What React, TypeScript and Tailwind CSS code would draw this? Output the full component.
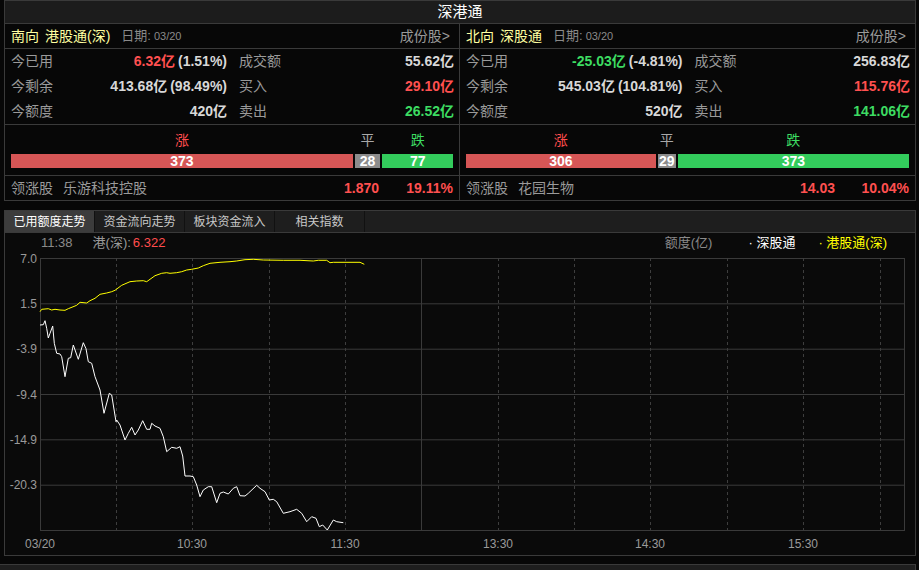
import React from 'react';

type Side = {
  dir: string;
  name: string;
  used: string;
  usedPct: string;
  usedColor: string;
  left: string;
  leftPct: string;
  quota: string;
  turnover: string;
  buy: string;
  sell: string;
  up: number;
  flat: number;
  down: number;
  leader: string;
  leaderPrice: string;
  leaderPct: string;
};

const sides: Side[] = [
  {
    dir: '南向',
    name: '港股通(深)',
    used: '6.32亿',
    usedPct: '(1.51%)',
    usedColor: 'text-[#ff5050]',
    left: '413.68亿',
    leftPct: '(98.49%)',
    quota: '420亿',
    turnover: '55.62亿',
    buy: '29.10亿',
    sell: '26.52亿',
    up: 373,
    flat: 28,
    down: 77,
    leader: '乐游科技控股',
    leaderPrice: '1.870',
    leaderPct: '19.11%',
  },
  {
    dir: '北向',
    name: '深股通',
    used: '-25.03亿',
    usedPct: '(-4.81%)',
    usedColor: 'text-[#3ddc62]',
    left: '545.03亿',
    leftPct: '(104.81%)',
    quota: '520亿',
    turnover: '256.83亿',
    buy: '115.76亿',
    sell: '141.06亿',
    up: 306,
    flat: 29,
    down: 373,
    leader: '花园生物',
    leaderPrice: '14.03',
    leaderPct: '10.04%',
  },
];

// traced from the intraday chart (zoomed coords, /3 to page pixels)
const yellowRaw: [number, number][] = [
  [120, 245], [125, 238], [145, 236], [155, 240], [165, 238], [180, 240], [195, 241], [205, 236],
  [230, 226], [240, 217], [260, 219], [270, 212], [285, 205], [300, 193], [320, 189], [335, 185],
  [345, 181], [365, 166], [390, 155], [410, 153], [430, 152], [440, 155], [450, 148], [465, 137],
  [485, 130], [500, 128], [510, 130], [530, 128], [545, 125], [560, 120], [575, 118], [595, 114],
  [610, 107], [630, 100], [660, 97], [690, 95], [710, 93], [735, 89], [760, 88], [790, 90],
  [850, 91], [900, 91], [940, 93], [955, 91], [980, 91], [990, 98], [1000, 97], [1080, 97], [1093, 103],
];
const whiteTop: [number, number][] = [
  [120, 285], [130, 284], [135, 272], [140, 295], [145, 324], [150, 310], [158, 288], [163, 340],
  [170, 370], [180, 372], [185, 380], [195, 440], [205, 385], [212, 383], [220, 345], [235, 388],
  [250, 338], [258, 356], [265, 395], [275, 400], [285, 440], [300, 480], [312, 550], [328, 490],
  [335, 495], [348, 575],
];
const whiteBottom: [number, number][] = [
  [350, 0], [360, 15], [375, 60], [385, 40], [395, 22], [405, 45], [415, 30], [428, 2], [440, 28],
  [450, 28], [455, 10], [465, 18], [480, 25], [490, 50], [500, 95], [515, 82], [530, 85], [540, 80],
  [548, 108], [555, 168], [570, 168], [580, 170], [590, 195], [600, 230], [610, 210], [625, 200],
  [635, 200], [650, 248], [660, 220], [670, 216], [685, 222], [700, 205], [710, 200], [720, 227],
  [735, 228], [745, 220], [770, 196], [780, 205], [795, 215], [808, 240], [820, 238], [830, 245],
  [850, 280], [870, 275], [890, 268], [905, 280], [920, 305], [935, 290], [948, 295], [958, 320],
  [968, 315], [982, 330], [1000, 300], [1010, 305], [1030, 308],
];

const toPts = (raw: [number, number][], oy: number) =>
  raw.map(([x, y]) => `${(x / 3).toFixed(1)},${(oy + y / 3).toFixed(1)}`).join(' ');

const yellowPts = toPts(yellowRaw, 230);
const whitePts = toPts(whiteTop, 230) + ' ' + toPts(whiteBottom, 420);

const hLines = [258.5, 303.8, 349.2, 394.5, 439.8, 485.2, 530.5];
const yLabels = ['7.0', '1.5', '-3.9', '-9.4', '-14.9', '-20.3'];
const dashed = [116, 192, 269, 345, 498, 574, 650, 727, 803, 880];
const xLabels: [number, string][] = [[192, '10:30'], [345, '11:30'], [498, '13:30'], [650, '14:30'], [803, '15:30']];

function DataRow({ label, value, extra, color, label2, value2, color2 }: {
  label: string; value: string; extra?: string; color: string; label2: string; value2: string; color2: string;
}) {
  return (
    <div className="grid grid-cols-2 h-[25px] items-center">
      <div className="flex items-center justify-between pl-[6px] pr-[5px]">
        <span className="text-[#9a9a9a]">{label}</span>
        <span className="font-bold">
          <span className={color}>{value}</span>
          {extra && <span className="ml-[3px] text-[#d8d8d8]">{extra}</span>}
        </span>
      </div>
      <div className="flex items-center justify-between pl-[7px] pr-[5px]">
        <span className="text-[#9a9a9a]">{label2}</span>
        <span className={`font-bold ${color2}`}>{value2}</span>
      </div>
    </div>
  );
}

function Panel({ s, first }: { s: Side; first: boolean }) {
  const segs = [
    { n: s.up, label: '涨', lc: 'text-[#ff4d4d]', bg: 'bg-[#d65656]' },
    { n: s.flat, label: '平', lc: 'text-[#a8a8a8]', bg: 'bg-[#8c8c8c]' },
    { n: s.down, label: '跌', lc: 'text-[#3ddc62]', bg: 'bg-[#33cc5c]' },
  ];
  return (
    <div className={first ? 'border-r border-[#3a3a3a]' : ''}>
      <div className="h-[25px] flex items-center px-[6px] border-b border-[#3a3a3a]">
        <span className="text-[#ffffa0]">{s.dir}</span>
        <span className="text-[#ffffa0] ml-[6px]">{s.name}</span>
        <span className="text-[#8a8a8a] text-[13px] ml-[11px]">日期:</span>
        <span className="text-[#8a8a8a] text-[11px] ml-[3px]">03/20</span>
        <span className="ml-auto text-[#9a9a9a] pr-[3px]">成份股&gt;</span>
      </div>
      <div className="border-b border-[#3a3a3a]">
        <DataRow label="今已用" value={s.used} extra={s.usedPct} color={s.usedColor} label2="成交额" value2={s.turnover} color2="text-[#d8d8d8]" />
        <DataRow label="今剩余" value={s.left} extra={s.leftPct} color="text-[#d8d8d8]" label2="买入" value2={s.buy} color2="text-[#ff5050]" />
        <DataRow label="今额度" value={s.quota} color="text-[#d8d8d8]" label2="卖出" value2={s.sell} color2="text-[#3ddc62]" />
      </div>
      <div className="pt-[6px] pb-[7px] px-[6px] border-b border-[#3a3a3a]">
        <div className="flex gap-[2px] h-[18px] items-center">
          {segs.map((g) => (
            <div key={g.label} className={`text-center ${g.lc}`} style={{ flexGrow: g.n, flexBasis: 0 }}>
              {g.label}
            </div>
          ))}
        </div>
        <div className="flex gap-[2px] h-[14px] mt-[5px]">
          {segs.map((g) => (
            <div
              key={g.label}
              className={`${g.bg} text-white font-bold text-[14px] leading-[14px] text-center`}
              style={{ flexGrow: g.n, flexBasis: 0 }}
            >
              {g.n}
            </div>
          ))}
        </div>
      </div>
      <div className="h-[24px] flex items-center px-[6px]">
        <span className="text-[#9a9a9a]">领涨股</span>
        <span className="text-[#9a9a9a] ml-[10px]">{s.leader}</span>
        <span className="ml-auto font-bold text-[#ff5050]">{s.leaderPrice}</span>
        <span className="w-[74px] text-right font-bold text-[#ff5050]">{s.leaderPct}</span>
      </div>
    </div>
  );
}

const tabs = ['已用额度走势', '资金流向走势', '板块资金流入', '相关指数'];

export default function App() {
  return (
    <div className="w-[919px] h-[570px] bg-[#070707] overflow-hidden text-[14px] text-[#d8d8d8] font-['Liberation_Sans','Noto_Sans_CJK_SC',sans-serif]">
      <div className="ml-[4px] w-[912px]">
        <div className="h-[23px] bg-[#1c1c1c] border-t border-x border-[#3a3a3a] flex items-center justify-center text-white text-[15px]">
          深港通
        </div>
        <div className="grid grid-cols-2 border border-[#3a3a3a]">
          {sides.map((s, i) => (
            <Panel key={s.dir} s={s} first={i === 0} />
          ))}
        </div>

        <div className="mt-[9px] h-[23px] flex bg-[#1e1e1e] border border-[#3a3a3a] text-[12px]">
          {tabs.map((t, i) => (
            <div
              key={t}
              className={`w-[90px] flex items-center justify-center border-r border-[#111] ${
                i === 0 ? 'bg-[#3c3c3c] text-white' : 'text-[#c8c8c8]'
              }`}
            >
              {t}
            </div>
          ))}
        </div>

        <div className="border-x border-b border-[#3a3a3a] bg-[#0a0a0a]">
          <div className="h-[20px] flex items-center text-[13px]">
            <span className="ml-[36px] text-[#8a8a8a]">11:38</span>
            <span className="ml-[20px] text-[#9a9a9a]">港(深):</span>
            <span className="ml-[2px] text-[#ff4d4d]">6.322</span>
            <span className="ml-auto text-[#8a8a8a]">额度(亿)</span>
            <span className="ml-[36px] text-white">· 深股通</span>
            <span className="ml-[23px] mr-[28px] text-[#ffff00]">· 港股通(深)</span>
          </div>
          <svg width={910} height={302} viewBox="5 253 910 302" className="block">
            {hLines.map((y) => (
              <line key={y} x1={40} x2={905} y1={y} y2={y} stroke="#3a3a3a" strokeWidth={1} />
            ))}
            {dashed.map((x) => (
              <line key={x} x1={x + 0.5} x2={x + 0.5} y1={258} y2={530} stroke="#3e3e3e" strokeWidth={1} strokeDasharray="3 3" />
            ))}
            {[40.5, 421.5, 904.5].map((x) => (
              <line key={x} x1={x} x2={x} y1={258} y2={531} stroke="#3a3a3a" strokeWidth={1} />
            ))}
            {yLabels.map((l, i) => (
              <text key={l} x={37} y={hLines[i] + 4} textAnchor="end" fontSize={12} fill="#9a9a9a" fontFamily="Liberation Sans, sans-serif">
                {l}
              </text>
            ))}
            <text x={25} y={548} fontSize={12} fill="#9a9a9a" fontFamily="Liberation Sans, sans-serif">03/20</text>
            {xLabels.map(([x, l]) => (
              <text key={l} x={x} y={548} textAnchor="middle" fontSize={12} fill="#9a9a9a" fontFamily="Liberation Sans, sans-serif">
                {l}
              </text>
            ))}
            <polyline points={yellowPts} fill="none" stroke="#ffff00" strokeWidth={1} />
            <polyline points={whitePts} fill="none" stroke="#ffffff" strokeWidth={1} />
          </svg>
        </div>
      </div>
      <div className="mt-[8px] w-[916px] h-[10px] bg-[#1e1e1e] border-t border-r border-[#3a3a3a]" />
    </div>
  );
}
